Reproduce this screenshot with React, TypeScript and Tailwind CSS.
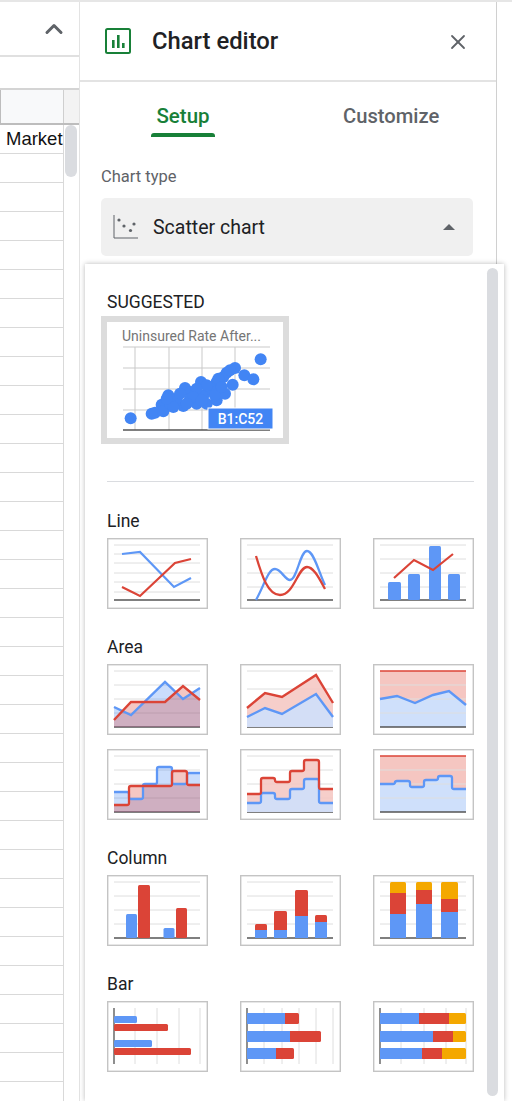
import type { ReactNode } from "react";
import { ChevronUp, X } from "lucide-react";

const BLUE = "#5e97f6";
const RED = "#db4437";
const YELLOW = "#f4a800";

function pts(list: number[][]) {
  return list.map((p) => p.join(",")).join(" ");
}

function steps(start: number, list: number[][]) {
  // list is [y, endX] pairs, drawn as a stepped line with soft corners
  const r = 2;
  let d = `M${start} ${list[0][0]} `;
  list.forEach(([y, endX], i) => {
    const next = list[i + 1];
    if (!next) {
      d += `L${endX} ${y} `;
      return;
    }
    const dir = next[0] > y ? 1 : -1;
    d += `L${endX - r} ${y} Q${endX} ${y} ${endX} ${y + dir * r} `;
    d += `L${endX} ${next[0] - dir * r} Q${endX} ${next[0]} ${endX + r} ${next[0]} `;
  });
  return d;
}

function HGrid({ ys, axis = 62 }: { ys: number[]; axis?: number }) {
  return (
    <>
      {ys.map((y) => (
        <line key={y} x1="7" x2="93" y1={y} y2={y} stroke="#dedede" strokeWidth="1" />
      ))}
      <line x1="7" x2="93" y1={axis} y2={axis} stroke="#555555" strokeWidth="1.4" />
    </>
  );
}

function VGrid({ xs }: { xs: number[] }) {
  return (
    <>
      {xs.map((x) => (
        <line key={x} x1={x} x2={x} y1="7" y2="63" stroke="#dedede" strokeWidth="1" />
      ))}
      <line x1="7" x2="7" y1="7" y2="63" stroke="#444444" strokeWidth="1.2" />
    </>
  );
}

function Thumb({ children }: { children: ReactNode }) {
  return (
    <svg viewBox="0 0 101 71" className="block h-[71px] w-[101px]">
      <rect x="0.7" y="0.7" width="99.6" height="69.6" fill="#ffffff" stroke="#c4c4c4" strokeWidth="1.4" />
      {children}
    </svg>
  );
}

function Stroke({ d, color }: { d: string; color: string }) {
  return <path d={d} fill="none" stroke={color} strokeWidth="2.3" strokeLinejoin="round" />;
}

function Bar({ x, y, w, h, color }: { x: number; y: number; w: number; h: number; color: string }) {
  return <rect x={x} y={y} width={w} height={h} rx="1.5" fill={color} />;
}

function Line1() {
  return (
    <Thumb>
      <HGrid ys={[7, 16, 25, 35, 44, 54]} />
      <polyline points={pts([[15, 16], [33, 14], [67, 49], [84, 40]])} fill="none" stroke={BLUE} strokeWidth="2.2" />
      <polyline points={pts([[15, 49], [33, 58], [68, 25], [84, 21]])} fill="none" stroke={RED} strokeWidth="2.2" />
    </Thumb>
  );
}

function Line2() {
  return (
    <Thumb>
      <HGrid ys={[7, 21, 35, 49]} />
      <Stroke d="M16 62 C24 48 28 31 35 31 C41 31 45 42 50 42 C57 42 60 13 67 13 C74 13 79 35 85 47" color={BLUE} />
      <Stroke d="M16 18 C22 38 28 57 40 57 C54 57 58 29 67 29 C74 29 80 42 85 51" color={RED} />
    </Thumb>
  );
}

function Line3() {
  return (
    <Thumb>
      <HGrid ys={[7, 21, 35, 49]} />
      <Bar x={15} y={44} w={13} h={18} color={BLUE} />
      <Bar x={35} y={36} w={12} h={26} color={BLUE} />
      <Bar x={56} y={8} w={12} h={54} color={BLUE} />
      <Bar x={75} y={36} w={12} h={26} color={BLUE} />
      <polyline points={pts([[21, 40], [41, 22], [60, 32], [80, 16]])} fill="none" stroke={RED} strokeWidth="2.2" />
    </Thumb>
  );
}

function AreaChart({ blue, red }: { blue: number[][]; red: number[][] }) {
  const close = (list: number[][]) => pts([...list, [93, 63], [7, 63]]);
  return (
    <Thumb>
      <HGrid ys={[7, 21, 35, 49]} axis={63} />
      <polygon points={close(blue)} fill="#4285f4" fillOpacity="0.28" />
      <polygon points={close(red)} fill="#db4437" fillOpacity="0.3" />
      <polyline points={pts(blue)} fill="none" stroke={BLUE} strokeWidth="2.4" />
      <polyline points={pts(red)} fill="none" stroke={RED} strokeWidth="2.4" />
    </Thumb>
  );
}

function StackedArea({ blue, red }: { blue: number[][]; red: number[][] }) {
  const close = (list: number[][]) => pts([...list, [93, 63], [7, 63]]);
  return (
    <Thumb>
      <HGrid ys={[7, 25, 49]} axis={63} />
      <polygon points={close(red)} fill="#f5c6c1" fillOpacity="0.85" />
      <polygon points={close(blue)} fill="#cfe0fb" fillOpacity="0.9" />
      <polyline points={pts(blue)} fill="none" stroke={BLUE} strokeWidth="2.4" />
      <polyline points={pts(red)} fill="none" stroke={RED} strokeWidth="2.4" />
    </Thumb>
  );
}

function Area100({ blue }: { blue: number[][] }) {
  return (
    <Thumb>
      <polygon points={pts([[7, 7], [93, 7], [93, 63], [7, 63]])} fill="#f5c6c1" />
      <polygon points={pts([...blue, [93, 63], [7, 63]])} fill="#cfe0fb" />
      <HGrid ys={[21, 35, 49]} axis={63} />
      <line x1="7" x2="93" y1="7" y2="7" stroke={RED} strokeWidth="1.4" />
      <polyline points={pts(blue)} fill="none" stroke={BLUE} strokeWidth="2.4" />
    </Thumb>
  );
}

function StepChart({ blue, red }: { blue: number[][]; red: number[][] }) {
  const blueD = steps(7, blue);
  const redD = steps(7, red);
  return (
    <Thumb>
      <HGrid ys={[7, 21, 35, 49]} axis={63} />
      <path d={`${blueD} L93 63 L7 63 Z`} fill="#4285f4" fillOpacity="0.28" />
      <path d={`${redD} L93 63 L7 63 Z`} fill="#db4437" fillOpacity="0.3" />
      <Stroke d={blueD} color={BLUE} />
      <Stroke d={redD} color={RED} />
    </Thumb>
  );
}

function StackedStep({ blue, red }: { blue: number[][]; red: number[][] }) {
  const blueD = steps(7, blue);
  const redD = steps(7, red);
  return (
    <Thumb>
      <HGrid ys={[7, 21, 35, 49]} axis={63} />
      <path d={`${redD} L93 63 L7 63 Z`} fill="#f5c6c1" fillOpacity="0.85" />
      <path d={`${blueD} L93 63 L7 63 Z`} fill="#cfe0fb" fillOpacity="0.9" />
      <Stroke d={blueD} color={BLUE} />
      <Stroke d={redD} color={RED} />
    </Thumb>
  );
}

function Step100() {
  const blue = steps(7, [[35, 22], [32, 37], [38, 51], [31, 65], [27, 79], [40, 93]]);
  return (
    <Thumb>
      <rect x="7" y="7" width="86" height="56" fill="#f5c6c1" />
      <path d={`${blue} L93 63 L7 63 Z`} fill="#cfe0fb" />
      <HGrid ys={[21, 35, 49]} axis={63} />
      <line x1="7" x2="93" y1="7" y2="7" stroke={RED} strokeWidth="1.4" />
      <Stroke d={blue} color={BLUE} />
    </Thumb>
  );
}

function Column1() {
  return (
    <Thumb>
      <HGrid ys={[7, 21, 35, 49]} axis={63} />
      <Bar x={19} y={39} w={11} h={24} color={BLUE} />
      <Bar x={31} y={10} w={12} h={53} color={RED} />
      <Bar x={56.5} y={53} w={11} h={10} color={BLUE} />
      <Bar x={69} y={33} w={11} h={30} color={RED} />
    </Thumb>
  );
}

function Column2() {
  const cols = [
    [15, 12, 55, 49],
    [34, 13, 55, 36],
    [55, 13, 41, 15],
    [75, 12, 47, 40],
  ];
  return (
    <Thumb>
      <HGrid ys={[7, 21, 35, 49]} axis={63} />
      {cols.map(([x, w, b, r]) => (
        <g key={x}>
          <Bar x={x} y={r} w={w} h={b - r + 2} color={RED} />
          <rect x={x} y={b} width={w} height={63 - b} fill={BLUE} />
        </g>
      ))}
    </Thumb>
  );
}

function Column3() {
  const cols = [
    [17, 16, 39, 18],
    [43, 16, 29, 15],
    [68, 17, 37, 24],
  ];
  return (
    <Thumb>
      <HGrid ys={[7, 21, 35, 49]} axis={63} />
      {cols.map(([x, w, b, r]) => (
        <g key={x}>
          <Bar x={x} y={7} w={w} h={r - 5} color={YELLOW} />
          <rect x={x} y={r} width={w} height={b - r} fill={RED} />
          <rect x={x} y={b} width={w} height={63 - b} fill={BLUE} />
        </g>
      ))}
    </Thumb>
  );
}

function Bar1() {
  return (
    <Thumb>
      <VGrid xs={[28, 50, 72, 93]} />
      <Bar x={7} y={15} w={23} h={7} color={BLUE} />
      <Bar x={7} y={23} w={54} h={7} color={RED} />
      <Bar x={7} y={39} w={38} h={7} color={BLUE} />
      <Bar x={7} y={47} w={77} h={7} color={RED} />
    </Thumb>
  );
}

function Bar2() {
  const rows = [
    [12, 45, 59],
    [30, 50, 81],
    [47, 36, 54],
  ];
  return (
    <Thumb>
      <VGrid xs={[24, 42, 59, 76, 93]} />
      {rows.map(([y, b, r]) => (
        <g key={y}>
          <Bar x={b - 2} y={y} w={r - b + 2} h={11} color={RED} />
          <rect x={7} y={y} width={b - 7} height={11} fill={BLUE} />
        </g>
      ))}
    </Thumb>
  );
}

function Bar3() {
  const rows = [
    [12, 46, 76],
    [30, 60, 80],
    [47, 49, 69],
  ];
  return (
    <Thumb>
      <VGrid xs={[28, 51, 73, 93]} />
      {rows.map(([y, b, r]) => (
        <g key={y}>
          <Bar x={r - 2} y={y} w={95 - r} h={11} color={YELLOW} />
          <rect x={b} y={y} width={r - b} height={11} fill={RED} />
          <rect x={7} y={y} width={b - 7} height={11} fill={BLUE} />
        </g>
      ))}
    </Thumb>
  );
}

const dots = [
  [122, 419], [512, 242], [435, 268], [410, 282], [463, 290], [490, 302], [428, 318], [380, 310],
  [400, 295], [333, 310], [285, 328], [235, 350], [215, 378], [185, 405], [195, 402], [220, 398],
  [280, 382], [320, 375], [350, 375], [380, 365], [405, 345], [360, 330], [300, 340], [260, 360],
  [340, 350], [240, 375], [300, 360], [370, 340], [385, 300], [350, 320], [320, 330], [270, 345],
  [250, 385], [230, 360], [310, 355], [335, 365], [375, 350], [395, 325], [420, 275], [290, 375],
];

function Suggested() {
  return (
    <svg viewBox="0 0 188 128" className="block h-[128px] w-[188px]">
      <rect x="3" y="3" width="182" height="122" fill="#ffffff" stroke="#dcdcdc" strokeWidth="6" />
      <text x="21" y="25" fontSize="14" fill="#757575" fontFamily="Roboto, sans-serif">
        Uninsured Rate After...
      </text>
      {[31, 52, 73, 94].map((y) => (
        <line key={y} x1="22" x2="169" y1={y} y2={y} stroke="#c9c9c9" strokeWidth="1" />
      ))}
      {[34, 68, 101, 134].map((x) => (
        <line key={x} x1={x} x2={x} y1="31" y2="114" stroke="#c9c9c9" strokeWidth="1" />
      ))}
      <line x1="22" x2="169" y1="114" y2="114" stroke="#555555" strokeWidth="1.4" />
      {dots.map(([x, y]) => (
        <circle key={`${x}-${y}`} cx={(x - 33) / 3} cy={(y - 112) / 3} r="6" fill="#4285f4" />
      ))}
      <rect x="107" y="92" width="65" height="21" fill="#4285f4" stroke="#ffffff" strokeWidth="1" />
      <text x="139.5" y="108" textAnchor="middle" fontSize="14" fontWeight="500" fill="#ffffff" fontFamily="Roboto, sans-serif">
        B1:C52
      </text>
    </svg>
  );
}

function Section({ title, children }: { title: string; children: ReactNode }) {
  return (
    <div>
      <div className="mb-[7px] h-[20px] text-[17.5px] leading-[20px] text-[#202124]">{title}</div>
      <div className="grid grid-cols-[101px_101px_101px] gap-x-[32px] gap-y-[14px]">{children}</div>
    </div>
  );
}

function ChartMenu() {
  return (
    <div className="absolute left-[85px] top-[262px] h-[837px] w-[419px] bg-white pl-[16px] shadow-[0_0_5px_rgba(0,0,0,0.28)]">
      <div className="absolute right-[6px] top-[4px] h-[828px] w-[11px] rounded-full bg-[#dadce0]" />
      <div className="pt-[28px] text-[17.5px] leading-[20px] text-[#202124]">
        <span className="pl-[6px]">SUGGESTED</span>
      </div>
      <div className="mt-[4px]">
        <Suggested />
      </div>
      <div className="ml-[6px] mt-[37px] h-px w-[367px] bg-[#dadce0]" />
      <div className="flex flex-col gap-[28px] pl-[6px] pt-[29px]">
        <Section title="Line">
          <Line1 />
          <Line2 />
          <Line3 />
        </Section>
        <Section title="Area">
          <AreaChart
            blue={[[7, 43], [24, 51], [58, 18], [76, 35], [93, 24]]}
            red={[[7, 56], [24, 38], [58, 38], [76, 22], [93, 36]]}
          />
          <StackedArea
            blue={[[7, 53], [25, 44], [42, 50], [76, 30], [93, 53]]}
            red={[[7, 44], [25, 29], [42, 33], [76, 11], [93, 39]]}
          />
          <Area100 blue={[[7, 35], [24, 32], [42, 39], [60, 31], [76, 27], [93, 41]]} />
          <StepChart
            blue={[[43, 22], [50, 36], [35, 50], [18, 65], [35, 80], [24, 93]]}
            red={[[56, 22], [37, 65], [22, 80], [36, 93]]}
          />
          <StackedStep
            blue={[[54, 21], [44, 35], [50, 50], [40, 64], [30, 79], [54, 93]]}
            red={[[45, 21], [29, 35], [33, 50], [22, 64], [11, 79], [40, 93]]}
          />
          <Step100 />
        </Section>
        <Section title="Column">
          <Column1 />
          <Column2 />
          <Column3 />
        </Section>
        <Section title="Bar">
          <Bar1 />
          <Bar2 />
          <Bar3 />
        </Section>
      </div>
    </div>
  );
}

function SheetColumn() {
  const rows = Array.from({ length: 34 });
  return (
    <div className="flex h-full w-[79px] shrink-0 flex-col overflow-hidden">
      <div className="flex h-[55px] shrink-0 items-center justify-end border-b-2 border-[#e0e0e0] pr-[11px]">
        <ChevronUp size={28} strokeWidth={2.6} className="text-[#5f6368]" />
      </div>
      <div className="h-[33px] shrink-0 border-b-2 border-[#d4d4d4]" />
      <div className="flex h-[35px] shrink-0 border-b-2 border-[#bdbdbd]">
        <div className="w-[64px] border-x border-r-[#cfcfcf] border-l-[#bdbdbd] bg-[#f8f9fa]" />
        <div className="flex-1 bg-[#f3f3f3]" />
      </div>
      <div className="relative flex-1">
        <div className="h-[29px] w-[64px] overflow-hidden whitespace-nowrap border-b border-r border-[#d9d9d9] pl-[6px] font-['Liberation_Sans',sans-serif] text-[18.5px] leading-[28px] text-[#111111]">
          Marketplace
        </div>
        {rows.map((_, i) => (
          <div key={i} className="h-[29px] w-[64px] border-b border-r border-[#d9d9d9]" />
        ))}
        <div className="absolute left-[65px] top-[0px] h-[52px] w-[12px] rounded-full bg-[#dadce0]" />
      </div>
    </div>
  );
}

export default function App() {
  return (
    <div className="relative flex h-[1101px] w-[512px] overflow-hidden border-t-2 border-[#e6e6e6] bg-white font-['Roboto',sans-serif]">
      <SheetColumn />
      <div className="flex h-full w-[418px] shrink-0 flex-col border-x border-l-[#e3e3e3] border-r-[#d0d0d0]">
        <div className="flex h-[80px] shrink-0 items-center border-b-2 border-[#e3e3e3] pl-[25px] pr-[26px]">
          <svg viewBox="0 0 26 26" className="h-[26px] w-[26px] shrink-0">
            <rect x="1" y="1" width="24" height="24" rx="1.5" fill="none" stroke="#188038" strokeWidth="2" />
            <rect x="7" y="12" width="2.6" height="8" fill="#188038" />
            <rect x="12" y="7" width="2.6" height="13" fill="#188038" />
            <rect x="17" y="15" width="2.6" height="5" fill="#188038" />
          </svg>
          <div className="ml-[21px] flex-1 text-[23.8px] font-medium leading-[28px] text-[#202124]">Chart editor</div>
          <X size={24} strokeWidth={1.8} className="mt-[2px] text-[#5f6368]" />
        </div>
        <div className="flex h-[56px] shrink-0 pl-[71px] pt-[20px]">
          <div className="flex w-[64px] flex-col items-center">
            <span className="text-[20.5px] font-medium leading-[28px] text-[#188038]">Setup</span>
            <div className="mt-[3px] h-[4px] w-[64px] rounded-t-[3px] bg-[#188038]" />
          </div>
          <span className="ml-[128px] text-[20.2px] font-medium leading-[28px] text-[#5f6368]">Customize</span>
        </div>
        <div className="pl-[21px] pt-[29px]">
          <div className="text-[16.5px] leading-[20px] text-[#5f6368]">Chart type</div>
          <div className="mt-[11px] flex h-[58px] w-[372px] items-center rounded-[5px] bg-[#f0f0f0] pl-[12px] pr-[18px]">
            <svg viewBox="0 0 26 26" className="h-[26px] w-[26px] shrink-0">
              <path d="M1 1 V24 H25" fill="none" stroke="#5f6368" strokeWidth="1" />
              <circle cx="6" cy="6" r="1.6" fill="#5f6368" />
              <circle cx="11" cy="12" r="1.6" fill="#5f6368" />
              <circle cx="17.5" cy="16.5" r="1.6" fill="#5f6368" />
              <circle cx="21" cy="10" r="1.6" fill="#5f6368" />
            </svg>
            <span className="ml-[14px] flex-1 pt-[2px] text-[19.5px] leading-[26px] text-[#202124]">Scatter chart</span>
            <div className="h-0 w-0 border-x-[6px] border-b-[6px] border-x-transparent border-b-[#5f6368]" />
          </div>
        </div>
      </div>
      <ChartMenu />
    </div>
  );
}
